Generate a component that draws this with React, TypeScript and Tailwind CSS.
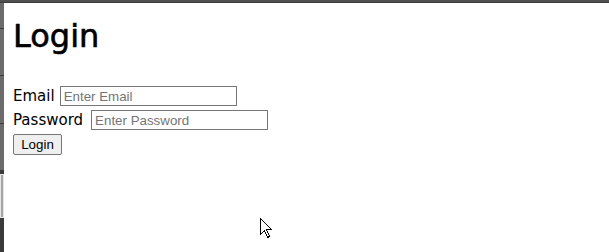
import React from "react";

function Cursor() {
  return (
    <svg
      className="absolute left-[259px] top-[217px]"
      width="14"
      height="22"
      viewBox="0 0 14 22"
      shapeRendering="crispEdges"
    >
      <path
        d="M1.5 1.5 L1.5 17.5 L5.5 13.5 L8.5 20.5 L10.5 19.5 L7.5 12.5 L12.5 12.5 Z"
        fill="#ffffff"
        stroke="#000000"
        strokeWidth="1"
      />
    </svg>
  );
}

export default function App() {
  return (
    <div className="relative flex flex-col w-[609px] h-[252px] bg-white overflow-hidden font-['DejaVu_Sans',sans-serif] text-black">
      {/* window chrome: top bar */}
      <div className="h-[3px] shrink-0 bg-[#505050] border-b border-[#3c3c3c]" />
      <div className="flex flex-1">
        {/* left strip */}
        <div className="w-[4px] shrink-0 flex flex-col bg-[#3a3a3a]">
          <div className="h-[26px] bg-[#6b6b6b] border-b border-[#3a3a3a]" />
          <div className="h-[47px] bg-[#6b6b6b] border-b border-[#3a3a3a]" />
          <div className="h-[48px] bg-[#6b6b6b] border-b border-[#3a3a3a]" />
          <div className="h-[47px] bg-[#6b6b6b] border-b border-[#3a3a3a]" />
          <div className="h-[3px]" />
          <div className="h-[44px] bg-[#a3a3aa] border border-[#e6e6e6]" />
        </div>

        {/* page */}
        <div className="flex-1 pl-[9px] pt-[15px]">
          <h1 className="text-[32px] leading-[37px] font-normal [-webkit-text-stroke:0.6px_black]">Login</h1>
          <form className="mt-[29px] flex flex-col">
            <div className="flex items-center h-[24px] text-[15px]">
              <label>Email</label>
              <input
                type="email"
                placeholder="Enter Email"
                className="ml-[5px] w-[177px] h-[20px] px-[3px] border border-[#767676] bg-white font-['Liberation_Sans',Arial,sans-serif] text-[13.33px] placeholder:text-[#757575] outline-none"
              />
            </div>
            <div className="flex items-center h-[24px] text-[15px]">
              <label>Password</label>
              <input
                type="password"
                placeholder="Enter Password"
                className="ml-[8px] w-[177px] h-[20px] px-[3px] border border-[#767676] bg-white font-['Liberation_Sans',Arial,sans-serif] text-[13.33px] placeholder:text-[#757575] outline-none"
              />
            </div>
            <div>
              <button
                type="button"
                className="w-[49px] h-[21px] border border-[#767676] rounded-[2px] bg-[#efefef] font-['Liberation_Sans',Arial,sans-serif] text-[13.33px] leading-none"
              >
                Login
              </button>
            </div>
          </form>
        </div>
      </div>
      <Cursor />
    </div>
  );
}
